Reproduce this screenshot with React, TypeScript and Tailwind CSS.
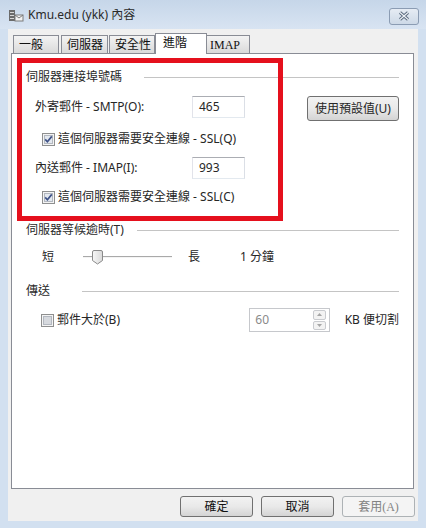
import React from 'react';

const Check: React.FC<{ checked?: boolean }> = ({ checked }) => (
    <svg width="13" height="13" viewBox="0 0 13 13" className="shrink-0">
        <rect x="0.5" y="0.5" width="12" height="12" fill="#f4f4f4" stroke="#8e8f8f" />
        <rect x="2.5" y="2.5" width="8" height="8" fill={checked ? '#e3e8ef' : '#d6d9de'} stroke="#b3b8c0" />
        {checked && <path d="M3.2 6.4 L5.4 8.8 L9.8 3.4" stroke="#3e5287" strokeWidth="1.7" fill="none" />}
    </svg>
);

const GroupHeader: React.FC<{ label: string; gap: string }> = ({ label, gap }) => (
    <div className="flex items-center h-[16px]">
        <span className="whitespace-nowrap text-[#2a2a2a]">{label}</span>
        <div className={`flex-1 h-px bg-[#c4c4c4] ${gap}`} />
    </div>
);

const DlgButton: React.FC<{ label: string; disabled?: boolean }> = ({ label, disabled }) => (
    <button
        className={
            disabled
                ? "w-[73px] h-[21px] rounded-[3px] border border-[#adb2b5] bg-[#f4f4f4] text-[#838383] font-['Liberation_Serif','Noto_Sans_CJK_TC',serif] text-[12px] leading-none"
                : "w-[73px] h-[21px] rounded-[3px] border border-[#707070] bg-gradient-to-b from-[#f2f2f2] via-[#e9e9e9] to-[#d4d4d4] text-[#111] font-['Liberation_Serif','Noto_Sans_CJK_TC',serif] text-[12px] leading-none"
        }
    >
        {label}
    </button>
);

export default function App() {
    return (
        <div className="w-[426px] h-[528px] flex flex-col bg-[#d2e0f0] overflow-hidden font-['Noto_Sans','Noto_Sans_CJK_TC',sans-serif] text-[12px] text-[#262626]">
            {/* Title bar */}
            <div className="h-[29px] flex items-center pl-[8px] pr-[7px] bg-gradient-to-b from-[#c6d6e9] to-[#d8e4f2]">
                <svg width="16" height="16" viewBox="0 0 16 16" className="shrink-0">
                    <rect x="1" y="3" width="6" height="11" fill="#6b6b6b" />
                    <rect x="2" y="5" width="4" height="1" fill="#d8d8d8" />
                    <rect x="2" y="8" width="4" height="1" fill="#d8d8d8" />
                    <rect x="2" y="11" width="4" height="1" fill="#d8d8d8" />
                    <rect x="7" y="8" width="8" height="6" fill="#f2f2f2" stroke="#7a7a7a" />
                    <path d="M7 8 L11 11 L15 8" stroke="#7a7a7a" fill="none" />
                </svg>
                <span className="ml-[4px] mt-[1px] text-[12px] text-[#2a2a2a]">Kmu.edu (ykk) 內容</span>
                <button className="ml-auto mt-[3px] w-[30px] h-[17px] rounded-[3px] border border-[#8b9cb3] bg-gradient-to-b from-[#e6ecf4] to-[#cdd9e7] flex items-center justify-center">
                    <svg width="12" height="10" viewBox="0 0 12 10">
                        <path d="M2 1.5 L10 8.5 M10 1.5 L2 8.5" stroke="#55657a" strokeWidth="3" />
                        <path d="M2 1.5 L10 8.5 M10 1.5 L2 8.5" stroke="#eef2f7" strokeWidth="1.2" />
                    </svg>
                </button>
            </div>

            {/* Client area */}
            <div className="flex-1 ml-[8px] mr-[8px] mb-[7px] bg-[#f0f0f0] flex flex-col">
                {/* Tabs */}
                <div className="flex items-end h-[25px] pl-[5px] text-[12px] font-['Liberation_Serif','Noto_Sans_CJK_TC',serif] leading-none text-[#111]">
                    <div className="w-[46px] h-[19px] pl-[5px] pt-[3px] border border-[#898c95] bg-gradient-to-b from-[#f3f3f3] to-[#dadada]">一般</div>
                    <div className="ml-[2px] w-[47px] h-[19px] pl-[5px] pt-[3px] border border-[#898c95] bg-gradient-to-b from-[#f3f3f3] to-[#dadada]">伺服器</div>
                    <div className="ml-[1px] w-[46px] h-[19px] pl-[5px] pt-[3px] border border-[#898c95] bg-gradient-to-b from-[#f3f3f3] to-[#dadada]">安全性</div>
                    <div className="relative z-10 w-[52px] h-[21px] pl-[7px] pt-[3px] border border-b-0 border-[#898c95] bg-white">進階</div>
                    <div className="w-[43px] h-[19px] pl-[3px] pt-[3px] border border-l-0 border-[#898c95] bg-gradient-to-b from-[#f3f3f3] to-[#dadada]">IMAP</div>
                </div>

                {/* Panel */}
                <div className="relative -mt-[1px] ml-[3px] mr-[4px] h-[436px] border border-[#898c95] bg-white px-[14px] leading-none">
                    <div className="mt-[15px]">
                        <GroupHeader label="伺服器連接埠號碼" gap="ml-[22px]" />
                    </div>

                    <div className="mt-[11px] flex items-start">
                        <div className="w-[166px] h-[22px] pl-[9px] flex items-center">外寄郵件 - SMTP(O):</div>
                        <div className="w-[53px] h-[22px] border border-[#abadb3] border-l-[#e2e3ea] border-r-[#dbdfe6] border-b-[#e3e9ef] pl-[6px] flex items-center">465</div>
                        <button className="ml-auto w-[92px] h-[25px] rounded-[3px] border border-[#707070] bg-gradient-to-b from-[#f2f2f2] via-[#e9e9e9] to-[#d4d4d4] text-[12px] text-[#262626]">
                            使用預設值(U)
                        </button>
                    </div>

                    <div className="mt-[10px] h-[16px] pl-[16px] flex items-center">
                        <Check checked />
                        <span className="ml-[3px]">這個伺服器需要安全連線 - SSL(Q)</span>
                    </div>

                    <div className="mt-[10px] flex items-start">
                        <div className="w-[166px] h-[22px] pl-[9px] flex items-center">內送郵件 - IMAP(I):</div>
                        <div className="w-[53px] h-[22px] border border-[#abadb3] border-l-[#e2e3ea] border-r-[#dbdfe6] border-b-[#e3e9ef] pl-[6px] flex items-center">993</div>
                    </div>

                    <div className="mt-[10px] h-[16px] pl-[16px] flex items-center">
                        <Check checked />
                        <span className="ml-[3px]">這個伺服器需要安全連線 - SSL(C)</span>
                    </div>

                    <div className="mt-[17px]">
                        <GroupHeader label="伺服器等候逾時(T)" gap="ml-[13px]" />
                    </div>

                    <div className="mt-[9px] h-[20px] pl-[16px] flex items-center">
                        <span>短</span>
                        <div className="relative ml-[29px] w-[89px] h-[20px] flex items-center">
                            <div className="w-full h-[2px] border-t border-[#a9a9a9] border-b border-b-[#f4f4f4] bg-[#dcdcdc]" />
                            <svg width="11" height="15" viewBox="0 0 11 15" className="absolute left-[9px] top-[3px]">
                                <defs>
                                    <linearGradient id="thumb" x1="0" y1="0" x2="1" y2="0">
                                        <stop offset="0" stopColor="#f7f7f7" />
                                        <stop offset="1" stopColor="#d9d9d9" />
                                    </linearGradient>
                                </defs>
                                <path d="M2 0.5 H9 Q10.5 0.5 10.5 2 V10.5 L5.5 14 L0.5 10.5 V2 Q0.5 0.5 2 0.5 Z" fill="url(#thumb)" stroke="#8a8a8a" />
                            </svg>
                        </div>
                        <span className="ml-[16px]">長</span>
                        <span className="ml-[40px]">1 分鐘</span>
                    </div>

                    <div className="mt-[16px]">
                        <GroupHeader label="傳送" gap="ml-[32px]" />
                    </div>

                    <div className="mt-[9px] h-[24px] flex items-center">
                        <div className="w-[225px] pl-[15px] flex items-center">
                            <Check />
                            <span className="ml-[3px]">郵件大於(B)</span>
                        </div>
                        <div className="w-[81px] h-[24px] border border-[#c6c8cc] bg-white flex items-center">
                            <span className="pl-[5px] text-[#8a8a8a]">60</span>
                            <div className="ml-auto mr-[3px] w-[13px] h-[20px] flex flex-col gap-[1px]">
                                <div className="flex-1 rounded-[2px] border border-[#c9cbcf] bg-[#f3f3f3] flex items-center justify-center">
                                    <svg width="5" height="3" viewBox="0 0 5 3"><path d="M0 3 L2.5 0 L5 3 Z" fill="#a5a5a5" /></svg>
                                </div>
                                <div className="flex-1 rounded-[2px] border border-[#c9cbcf] bg-[#f3f3f3] flex items-center justify-center">
                                    <svg width="5" height="3" viewBox="0 0 5 3"><path d="M0 0 L2.5 3 L5 0 Z" fill="#a5a5a5" /></svg>
                                </div>
                            </div>
                        </div>
                        <span className="ml-[15px] whitespace-nowrap">KB 便切割</span>
                    </div>

                    {/* Red annotation box */}
                    <div className="absolute left-[5px] top-[4px] w-[266px] h-[163px] border-[5px] border-[#e5101d] pointer-events-none" />
                </div>

                {/* Dialog buttons */}
                <div className="mt-[7px] pr-[3px] flex justify-end gap-[8px]">
                    <DlgButton label="確定" />
                    <DlgButton label="取消" />
                    <DlgButton label="套用(A)" disabled />
                </div>
            </div>
        </div>
    );
}
